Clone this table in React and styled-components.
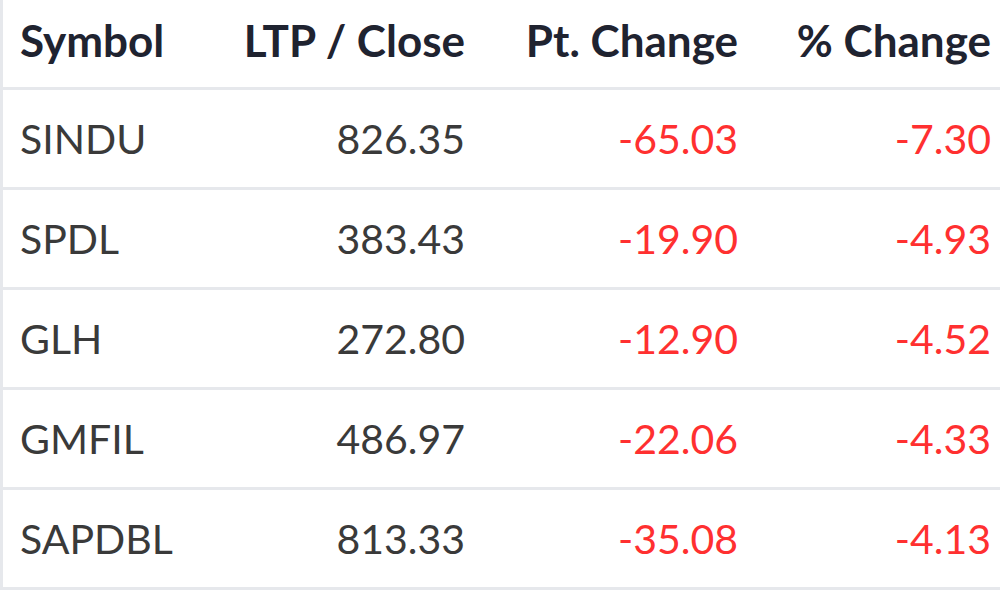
import React from 'react'
import styled, { createGlobalStyle } from 'styled-components'

const GlobalStyle = createGlobalStyle`
  body {
    margin: 0;
    background: #ffffff;
    font-family: Lato, "Liberation Sans", sans-serif;
  }
`

const Table = styled.div`
  display: grid;
  grid-template-columns: 200px 274px 273px 253px;
  border-left: 3px solid #e6e8ec;
  width: 997px;
`

const Row = styled.div`
  display: contents;
`

const Cell = styled.div`
  box-sizing: border-box;
  height: ${p => (p.head ? '90px' : '100px')};
  border-bottom: 3px solid #e6e8ec;
  display: flex;
  align-items: center;
  justify-content: ${p => (p.left ? 'flex-start' : 'flex-end')};
  padding: ${p => (p.left ? '0 0 0 17px' : '0 12px 0 0')};
  padding-bottom: ${p => (p.head ? '8px' : '0')};
  font-size: ${p => (p.head ? '44px' : '41px')};
  font-weight: ${p => (p.head ? 700 : 400)};
  color: ${p => (p.head ? '#1f2330' : p.red ? '#ff3030' : '#3a3a3a')};
  white-space: nowrap;
`

const rows = [
  ['SINDU', '826.35', '-65.03', '-7.30'],
  ['SPDL', '383.43', '-19.90', '-4.93'],
  ['GLH', '272.80', '-12.90', '-4.52'],
  ['GMFIL', '486.97', '-22.06', '-4.33'],
  ['SAPDBL', '813.33', '-35.08', '-4.13'],
]

const App = () => {
  return (
    <>
      <GlobalStyle />
      <Table>
        <Row>
          <Cell head left>Symbol</Cell>
          <Cell head>LTP / Close</Cell>
          <Cell head>Pt. Change</Cell>
          <Cell head>% Change</Cell>
        </Row>
        {rows.map(r => (
          <Row key={r[0]}>
            <Cell left>{r[0]}</Cell>
            <Cell>{r[1]}</Cell>
            <Cell red>{r[2]}</Cell>
            <Cell red>{r[3]}</Cell>
          </Row>
        ))}
      </Table>
    </>
  )
}

export default App
